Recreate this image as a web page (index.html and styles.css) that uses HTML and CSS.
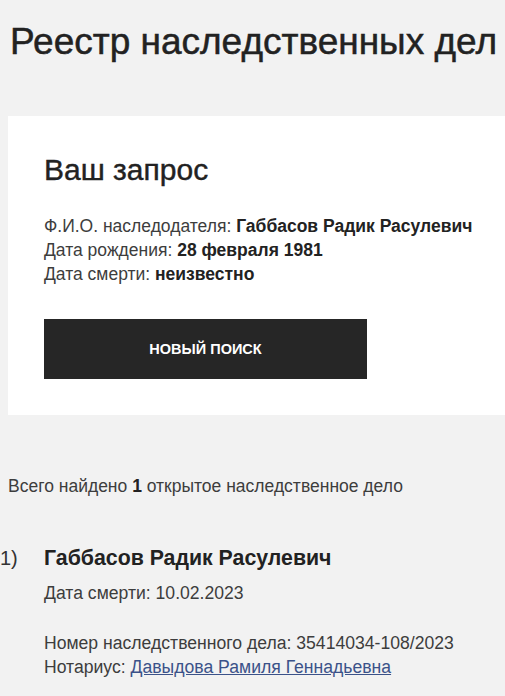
FILE: index.html
```html
<!DOCTYPE html>
<html lang="ru">
<head>
<meta charset="utf-8">
<link rel="stylesheet" href="styles.css">
</head>
<body>
<h1 class="title">Реестр наследственных дел</h1>
<section class="card">
  <h2 class="card-title">Ваш запрос</h2>
  <div class="info">
    <p>Ф.И.О. наследодателя: <b>Габбасов Радик Расулевич</b></p>
    <p>Дата рождения: <b>28 февраля 1981</b></p>
    <p>Дата смерти: <b>неизвестно</b></p>
  </div>
  <button class="btn">НОВЫЙ ПОИСК</button>
</section>
<p class="total">Всего найдено <b>1</b> открытое наследственное дело</p>
<div class="item">
  <div class="num">1)</div>
  <div class="item-body">
    <h3 class="item-name">Габбасов Радик Расулевич</h3>
    <p class="item-line first">Дата смерти: 10.02.2023</p>
    <p class="item-line gap">Номер наследственного дела: 35414034-108/2023</p>
    <p class="item-line">Нотариус: <a href="#">Давыдова Рамиля Геннадьевна</a></p>
  </div>
</div>
</body>
</html>
```
FILE: styles.css
```css
html, body {
  margin: 0;
  padding: 0;
  background: #f2f2f2;
  font-family: "Liberation Sans", Arial, sans-serif;
  color: #3d3d3d;
  overflow: hidden;
}
p { margin: 0; }
b { color: #222; font-weight: bold; }
.title {
  margin: 0;
  padding: 20px 0 0 10px;
  font-size: 37px;
  line-height: 44px;
  font-weight: normal;
  color: #222;
  white-space: nowrap;
  -webkit-text-stroke: 0.5px #222;
}
.card {
  margin: 52px 0 0 8px;
  background: #fff;
  padding: 36px 0 36px 36px;
}
.card-title {
  margin: 0;
  font-size: 30px;
  line-height: 36px;
  font-weight: normal;
  color: #222;
  -webkit-text-stroke: 0.4px #222;
}
.info {
  margin-top: 26px;
  font-size: 17.5px;
  line-height: 24px;
}
.btn {
  display: block;
  margin-top: 33px;
  width: 323px;
  height: 60px;
  border: 0;
  background: #262626;
  color: #fff;
  font-family: "Liberation Sans", Arial, sans-serif;
  font-weight: bold;
  font-size: 14.5px;
  padding: 0;
}
.total {
  margin: 59px 0 0 8px;
  font-size: 17.5px;
  line-height: 24px;
}
.item {
  display: flex;
  margin-top: 46px;
}
.num {
  width: 44px;
  font-size: 20px;
  line-height: 28px;
  color: #333;
}
.item-name {
  margin: 0;
  font-size: 21.3px;
  line-height: 28px;
  font-weight: bold;
  color: #222;
}
.item-line {
  font-size: 17.6px;
  line-height: 24px;
}
.first { margin-top: 9px; }
.gap { margin-top: 26px; }
a { color: #3b5289; text-decoration: underline; }
```
